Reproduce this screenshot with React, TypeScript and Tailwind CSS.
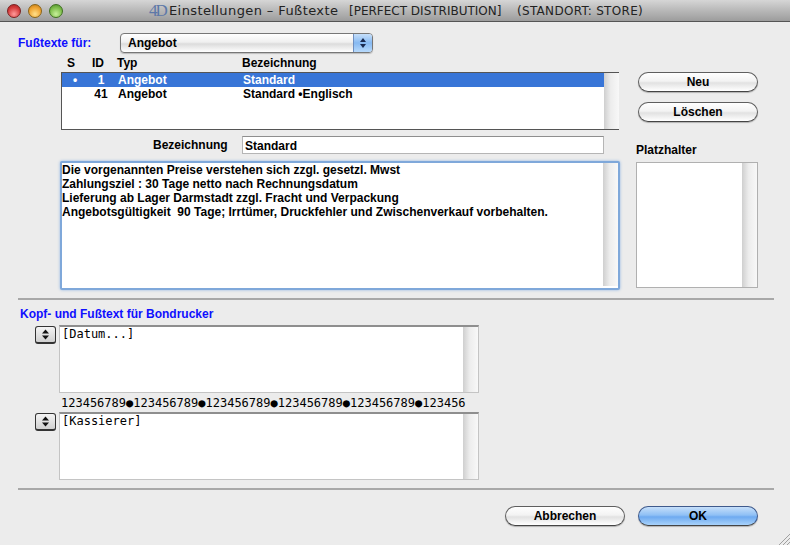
const SANS = "font-['Liberation_Sans',Arial,sans-serif]"

function Pill({ label, primary }: { label: string; primary?: boolean }) {
  return (
    <button type="button"
      className={`w-[120px] h-[20px] rounded-full border border-b-[#444] text-[12px] font-bold text-black shadow-[0_1px_1px_rgba(0,0,0,0.25)] leading-none ${primary ? 'bg-[linear-gradient(#c6dffa_0%,#8fc0f5_45%,#6eaaf0_55%,#a8d2fb_100%)] border-[#3f5a8c]' : 'bg-[linear-gradient(#ffffff_0%,#f3f3f3_45%,#e2e2e2_55%,#ffffff_100%)] border-[#5f5f5f]'}`}>
      {label}
    </button>
  )
}

function Scroll() {
  return <div className="w-[15px] shrink-0 self-stretch bg-[linear-gradient(90deg,#cfcfcf,#ededed_45%,#f8f8f8)]" />
}

function Stepper() {
  return (
    <button type="button" className="w-[21px] h-[18px] mt-px rounded-[3px] border border-[#333] border-b-2 bg-[linear-gradient(#f4f4f4,#d0d0d0)] flex items-center justify-center shrink-0">
      <svg width="9" height="11" viewBox="0 0 9 11"><path d="M4.5 0.5 8 4.5H1zM4.5 10.5 1 6.5h7z" fill="#111" /></svg>
    </button>
  )
}

function BonBox({ text }: { text: string }) {
  return (
    <div className="flex w-[420px] h-[68px] bg-white border-l border-b border-r border-t-2 border-[#c4c4c4] border-t-[#8e8e8e]">
      <div className="flex-1 pl-[2px] text-[12px] leading-[15px] font-normal text-black font-['DejaVu_Sans_Mono',monospace]">{text}</div>
      <Scroll />
    </div>
  )
}

export default function App() {
  return (
    <div className={`${SANS} relative w-[790px] h-[545px] overflow-hidden bg-[#ececec] text-[11.5px] font-bold text-black leading-[14px]`}>
      {/* Title bar */}
      <div className="h-[22px] flex items-center border-b border-[#555] bg-[linear-gradient(#d6d6d6,#b8b8b8_50%,#9c9c9c)] font-normal">
        <div className="flex gap-[7px] pl-[7px]">
          <span className="w-[14px] h-[14px] rounded-full border border-[#7a2020] bg-[radial-gradient(circle_at_50%_75%,#ff9a9a,#d43a3a_60%,#a51d1d)]" />
          <span className="w-[14px] h-[14px] rounded-full border border-[#8a6418] bg-[radial-gradient(circle_at_50%_75%,#ffe08a,#eea22f_60%,#b9771a)]" />
          <span className="w-[14px] h-[14px] rounded-full border border-[#3f7020] bg-[radial-gradient(circle_at_50%_75%,#c8f09a,#7cbc4a_60%,#4c8a2a)]" />
        </div>
        <span className="ml-[86px] w-[20px] text-[17px] font-normal text-[#5d78a8] tracking-[-2px] font-['Liberation_Serif',serif]">4D</span>
        <span className="w-[180px] text-[13px] tracking-[0.4px] text-[#222] font-['DejaVu_Sans',sans-serif]">Einstellungen – Fußtexte</span>
        <span className="w-[168px] text-[12px] text-[#222] font-['DejaVu_Sans',sans-serif]">[PERFECT DISTRIBUTION]</span>
        <span className="text-[12px] tracking-[0.3px] text-[#222] font-['DejaVu_Sans',sans-serif]">(STANDORT: STORE)</span>
      </div>

      {/* Selector */}
      <div className="flex items-center h-[20px] mt-[11px] pl-[18px]">
        <span className="w-[102px] text-[#0f0fff] text-[12px]">Fußtexte für:</span>
        <div className="flex w-[253px] h-[20px] rounded-[4px] border border-[#777] overflow-hidden shadow-[0_1px_1px_rgba(0,0,0,0.2)] bg-[linear-gradient(#fff,#f0f0f0_45%,#dcdcdc_55%,#fff)]">
          <span className="flex-1 pl-[7px] text-[12px] leading-[18px]">Angebot</span>
          <span className="w-[19px] flex items-center justify-center border-l border-[#6f8fc0] bg-[linear-gradient(#c6dffa,#86b9f2_50%,#b8dafc)]">
            <svg width="8" height="12" viewBox="0 0 8 12"><path d="M4 1 7 5H1zM4 11 1 7h6z" fill="#1a2a50" /></svg>
          </span>
        </div>
      </div>

      {/* Column heads */}
      <div className="flex h-[14px] mt-[3px] pl-[67px] text-[12px]">
        <span className="w-[25px]">S</span>
        <span className="w-[25px]">ID</span>
        <span className="w-[125px]">Typ</span>
        <span>Bezeichnung</span>
      </div>

      <div className="flex mt-[2px] pl-[61px] h-[58px]">
        {/* List */}
        <div className="flex w-[558px] border border-[#555] border-r-0 bg-white text-[12px]">
          <div className="flex-1">
            <div className="flex h-[14px] bg-[#3875d7] text-white">
              <span className="w-[25px] pl-[11px]">•</span>
              <span className="w-[28px] text-center">1</span>
              <span className="w-[125px] pl-[3px]">Angebot</span>
              <span className="pl-[3px]">Standard</span>
            </div>
            <div className="flex h-[14px]">
              <span className="w-[25px]" />
              <span className="w-[28px] text-center">41</span>
              <span className="w-[125px] pl-[3px]">Angebot</span>
              <span className="pl-[3px]">Standard •Englisch</span>
            </div>
          </div>
          <Scroll />
        </div>
        {/* Neu / Löschen */}
        <div className="flex flex-col gap-[10px] ml-[19px]">
          <Pill label="Neu" />
          <Pill label="Löschen" />
        </div>
      </div>

      {/* Bezeichnung + text */}
      <div className="flex mt-[6px] pl-[60px]">
        <div className="w-[560px]">
          <div className="flex items-center h-[18px] pl-[93px] text-[12px]">
            <span className="w-[89px]">Bezeichnung</span>
            <div className="w-[362px] h-[18px] bg-white border border-[#b5b5b5] border-t-[#8e8e8e] pl-[2px] leading-[18px]">Standard</div>
          </div>
          <div className="flex h-[129px] mt-[7px] pb-[2px] bg-white rounded-[2px] border-[2px] border-[#7fa8da] shadow-[0_0_3px_#8fb4e2] text-[12px] leading-[14px]">
            <div className="flex-1 whitespace-pre">
              {'Die vorgenannten Preise verstehen sich zzgl. gesetzl. Mwst\nZahlungsziel : 30 Tage netto nach Rechnungsdatum\nLieferung ab Lager Darmstadt zzgl. Fracht und Verpackung\nAngebotsgültigkeit  90 Tage; Irrtümer, Druckfehler und Zwischenverkauf vorbehalten.'}
            </div>
            <Scroll />
          </div>
        </div>
        <div className="ml-[16px] w-[122px] pt-[7px]">
          <div className="h-[18px] text-[12px]">Platzhalter</div>
          <div className="flex h-[126px] mt-px bg-white border border-[#b0b0b0]">
            <div className="flex-1" />
            <Scroll />
          </div>
        </div>
      </div>

      <div className="h-[2px] ml-[18px] mr-[16px] mt-[8px] bg-[#a8a8a8]" />

      {/* Bondrucker */}
      <div className="pl-[20px] mt-[7px] h-[14px] text-[#0f0fff] text-[12px]">Kopf- und Fußtext für Bondrucker</div>
      <div className="flex gap-[3px] pl-[35px] mt-[4px]">
        <Stepper />
        <BonBox text="[Datum...]" />
      </div>
      <div className="pl-[61px] h-[19px] text-[12px] leading-[20px] font-normal font-['DejaVu_Sans_Mono',monospace]">123456789●123456789●123456789●123456789●123456789●123456</div>
      <div className="flex gap-[3px] pl-[35px]">
        <Stepper />
        <BonBox text="[Kassierer]" />
      </div>

      <div className="h-[2px] ml-[18px] mr-[16px] mt-[8px] bg-[#a8a8a8]" />

      <div className="flex justify-end gap-[13px] pr-[32px] mt-[16px]">
        <Pill label="Abbrechen" />
        <Pill label="OK" primary />
      </div>

      {/* Resize grip */}
      <svg className="absolute right-0 bottom-0" width="12" height="12" viewBox="0 0 12 12">
        <path d="M1 12 12 1M5 12l7-7M9 12l3-3" stroke="#a0a0a0" strokeWidth="1" />
      </svg>
    </div>
  )
}
